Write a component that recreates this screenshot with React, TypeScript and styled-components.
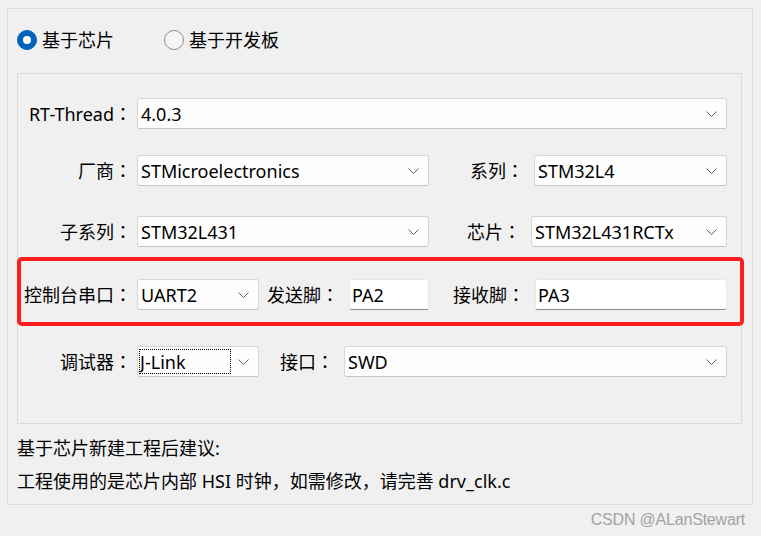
import React from "react";
import styled, { createGlobalStyle } from "styled-components";

const GlobalStyle = createGlobalStyle`
  html, body { margin: 0; padding: 0; background: #f0f0f0; }
  body { font-family: "Noto Sans", "Noto Sans CJK SC", sans-serif; }
`;

const Page = styled.div`
  width: 761px;
  height: 536px;
  box-sizing: border-box;
  padding: 8px 0 0 7px;
  display: flex;
  flex-direction: column;
  font-family: "Noto Sans", "Noto Sans CJK SC", sans-serif;
  font-size: 18px;
  color: #000;
  background: #f0f0f0;
`;

const Panel = styled.div`
  width: 746px;
  height: 497px;
  box-sizing: border-box;
  border: 1px solid #dcdcdc;
  padding: 18px 10px 0 9px;
  display: flex;
  flex-direction: column;
`;

const RadioRow = styled.div`
  display: flex;
  align-items: center;
  gap: 50px;
  height: 26px;
`;

const RadioOption = styled.label`
  display: flex;
  align-items: center;
  gap: 5px;
  line-height: 26px;
`;

const RadioCircle = styled.span<{ $checked?: boolean }>`
  width: 20px;
  height: 20px;
  box-sizing: border-box;
  border-radius: 50%;
  display: flex;
  align-items: center;
  justify-content: center;
  background: ${(p) => (p.$checked ? "#0062b8" : "#f6f6f6")};
  border: 1px solid ${(p) => (p.$checked ? "#0062b8" : "#8b8b8b")};
  &::after {
    content: "";
    display: ${(p) => (p.$checked ? "block" : "none")};
    width: 8px;
    height: 8px;
    border-radius: 50%;
    background: #fff;
  }
`;

const InnerBox = styled.div`
  margin-top: 20px;
  height: 351px;
  box-sizing: border-box;
  border: 1px solid #dadada;
  padding: 24px 14px 0 0;
  display: flex;
  flex-direction: column;
`;

const Row = styled.div<{ $mt?: number; $marked?: boolean }>`
  position: relative;
  display: flex;
  align-items: center;
  height: 31px;
  margin-top: ${(p) => p.$mt ?? 0}px;
  ${(p) =>
    p.$marked
      ? `&::before {
      content: "";
      position: absolute;
      left: -1px;
      right: -17px;
      top: -22px;
      bottom: -16px;
      border: 4px solid #fe1d1d;
      border-radius: 5px;
      pointer-events: none;
    }`
      : ""}
`;

const Label = styled.span<{ $w: number; $pr?: number }>`
  width: ${(p) => p.$w}px;
  flex: none;
  box-sizing: border-box;
  text-align: right;
  padding-right: ${(p) => p.$pr ?? 5}px;
  white-space: nowrap;
  line-height: 31px;
`;

const Colon = styled.span`
  font-family: "Noto Sans CJK JP", "Noto Sans CJK SC", sans-serif;
`;

const SelectBox = styled.div<{ $w?: number }>`
  ${(p) => (p.$w ? `width: ${p.$w}px; flex: none;` : "flex: 1;")}
  height: 31px;
  box-sizing: border-box;
  display: flex;
  align-items: center;
  justify-content: space-between;
  padding: 0 9px 0 1px;
  background: #fdfdfd;
  border: 1px solid #d6d6d6;
  border-bottom-color: #c4c4c4;
  border-radius: 3px;
`;

const Value = styled.span<{ $focus?: boolean }>`
  display: flex;
  align-items: center;
  height: 25px;
  box-sizing: border-box;
  padding-left: ${(p) => (p.$focus ? 0 : 1)}px;
  width: ${(p) => (p.$focus ? "92px" : "auto")};
  border: 1px ${(p) => (p.$focus ? "dotted #000" : "solid transparent")};
  white-space: nowrap;
`;

const TextBox = styled.div<{ $w?: number }>`
  ${(p) => (p.$w ? `width: ${p.$w}px; flex: none;` : "flex: 1;")}
  height: 31px;
  box-sizing: border-box;
  display: flex;
  align-items: center;
  padding-left: 2px;
  background: #fff;
  border: 1px solid #e8e8e8;
  border-bottom-color: #8a8a8a;
  border-radius: 3px;
`;

const Notes = styled.div`
  margin-top: 8px;
  line-height: 33px;
`;

const Watermark = styled.div`
  align-self: flex-end;
  margin-right: 16px;
  font-family: "Liberation Sans", Arial, sans-serif;
  font-size: 16px;
  line-height: 30px;
  color: #a2a2a2;
  letter-spacing: -0.2px;
`;

const Chevron = () => (
  <svg width="11" height="6" viewBox="0 0 11 6" fill="none">
    <path d="M0.5 0.5 L5.5 5.5 L10.5 0.5" stroke="#5f5f5f" strokeWidth="1" />
  </svg>
);

const Select: React.FC<{ value: string; w?: number; focus?: boolean }> = ({ value, w, focus }) => (
  <SelectBox $w={w}>
    <Value $focus={focus}>{value}</Value>
    <Chevron />
  </SelectBox>
);

const Input: React.FC<{ value: string; w?: number }> = ({ value, w }) => (
  <TextBox $w={w}>{value}</TextBox>
);

const FieldLabel: React.FC<{ text: string; w: number; pr?: number }> = ({ text, w, pr }) => (
  <Label $w={w} $pr={pr}>
    {text}
    <Colon>：</Colon>
  </Label>
);

export default function App() {
  return (
    <>
      <GlobalStyle />
      <Page>
        <Panel>
          <RadioRow>
            <RadioOption>
              <RadioCircle $checked />
              基于芯片
            </RadioOption>
            <RadioOption>
              <RadioCircle />
              基于开发板
            </RadioOption>
          </RadioRow>
          <InnerBox>
            <Row>
              <FieldLabel text="RT-Thread" w={119} />
              <Select value="4.0.3" />
            </Row>
            <Row $mt={26}>
              <FieldLabel text="厂商" w={119} />
              <Select value="STMicroelectronics" w={292} />
              <FieldLabel text="系列" w={105} pr={10} />
              <Select value="STM32L4" />
            </Row>
            <Row $mt={30}>
              <FieldLabel text="子系列" w={119} />
              <Select value="STM32L431" w={292} />
              <FieldLabel text="芯片" w={102} pr={10} />
              <Select value="STM32L431RCTx" />
            </Row>
            <Row $mt={32} $marked>
              <FieldLabel text="控制台串口" w={119} />
              <Select value="UART2" w={122} />
              <FieldLabel text="发送脚" w={90} pr={10} />
              <Input value="PA2" w={80} />
              <FieldLabel text="接收脚" w={106} pr={10} />
              <Input value="PA3" />
            </Row>
            <Row $mt={36}>
              <FieldLabel text="调试器" w={119} />
              <Select value="J-Link" w={122} focus />
              <FieldLabel text="接口" w={85} pr={10} />
              <Select value="SWD" />
            </Row>
          </InnerBox>
          <Notes>
            <div>基于芯片新建工程后建议:</div>
            <div>工程使用的是芯片内部 HSI 时钟，如需修改，请完善 drv_clk.c</div>
          </Notes>
        </Panel>
        <Watermark>CSDN @ALanStewart</Watermark>
      </Page>
    </>
  );
}
